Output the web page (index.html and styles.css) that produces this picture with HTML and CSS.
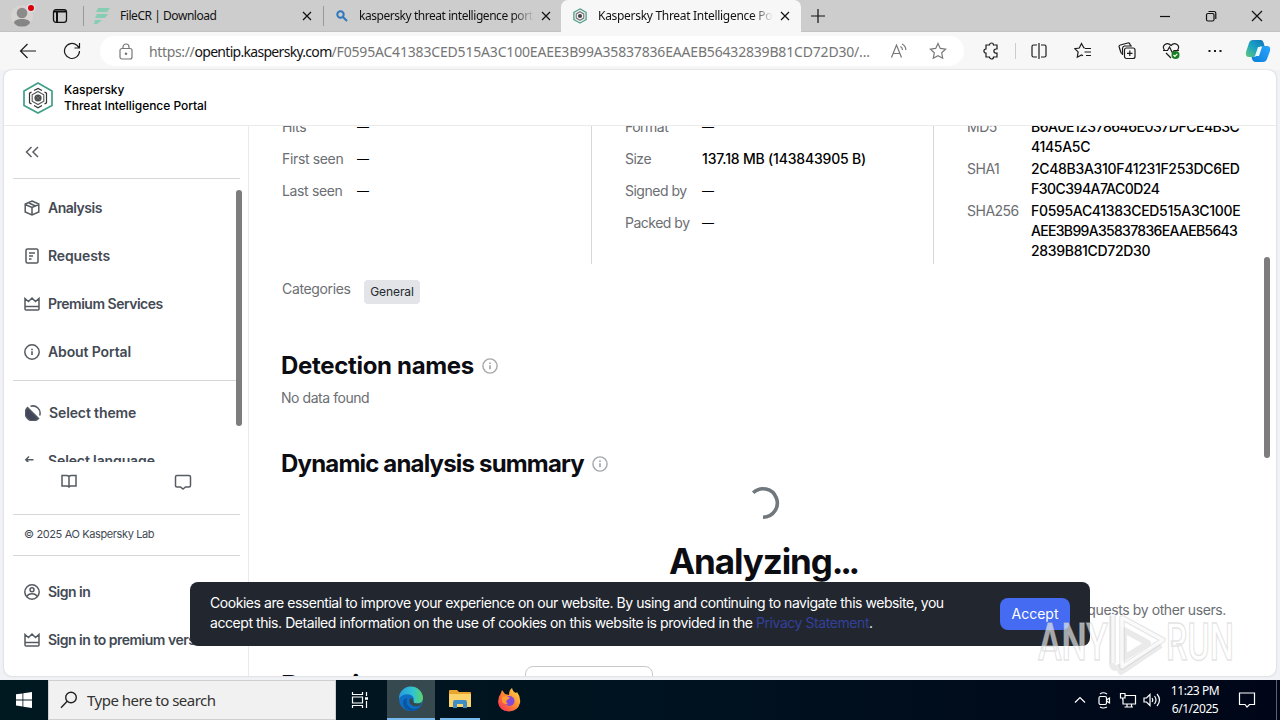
FILE: index.html
```html
<!DOCTYPE html>
<html lang="en">

<head>
    <meta charset="utf-8">
    <title>Kaspersky Threat Intelligence Portal</title>
    <link rel="stylesheet" href="styles.css">
</head>

<body>
    <!-- tab strip -->
    <div class="tabs">
        <svg class="profile" width="32" height="32" viewBox="0 0 32 32">
            <circle cx="16" cy="16" r="11" fill="#d6d3d1" />
            <circle cx="16" cy="13" r="5.300" fill="#8b8b8b" />
            <path d="M8 23c0-3 4-4 8-4s8 1 8 4c-2 3-5 3.500-8 3.500S10 26 8 23z" fill="#858585" />
            <circle cx="25" cy="8" r="4.500" fill="#dcdcdc" />
            <circle cx="25" cy="8" r="3" fill="#d9000d" />
        </svg>
        <svg class="tab-menu" width="16" height="16" viewBox="0 0 16 16" fill="none" stroke="#111" stroke-width="1.300">
            <rect x="1.500" y="1.700" width="13" height="12.600" rx="2.500" />
            <path d="M2 3.500h12M5 4v10" stroke-width="2" />
        </svg>
        <div class="tab tab-first">
            <svg class="favicon" width="16" height="18" viewBox="0 0 16 18" fill="#86cdb4">
                <path d="M4 1h12l-3 4H2zM3 7h11l-3 4H1zM1 13h7l-5 4H0z" />
            </svg>
            <span class="tab-title">FileCR | Download</span>
            <svg class="close" width="10" height="10" viewBox="0 0 10 10"><path d="M1 1l8 8M9 1l-8 8" /></svg>
        </div>
        <div class="tab tab-second">
            <svg class="favicon" width="16" height="16" viewBox="0 0 16 16" fill="none" stroke="#2f77bd" stroke-width="2">
                <circle cx="6.500" cy="6.500" r="3.200" /><path d="M9 9l4 4" />
            </svg>
            <span class="tab-title fade">kaspersky threat intelligence portal</span>
            <svg class="close" width="10" height="10" viewBox="0 0 10 10"><path d="M1 1l8 8M9 1l-8 8" /></svg>
        </div>
        <div class="tab tab-active">
            <svg class="favicon" width="16" height="16" viewBox="0 0 32 34" fill="none">
                <path d="M16 2l13 7.500v15L16 32 3 24.500v-15z" stroke="#5da592" stroke-width="3" />
                <path d="M16 8l8 4.500v9L16 26l-8-4.500v-9z" stroke="#777" stroke-width="2.500" />
                <circle cx="16" cy="17" r="4.500" fill="#444" />
            </svg>
            <span class="tab-title fade">Kaspersky Threat Intelligence Portal</span>
            <svg class="close" width="10" height="10" viewBox="0 0 10 10"><path d="M1 1l8 8M9 1l-8 8" /></svg>
        </div>
        <svg class="new-tab" width="14" height="14" viewBox="0 0 14 14"><path d="M7 0v14M0 7h14" /></svg>
        <div class="win-buttons">
            <svg width="12" height="12" viewBox="0 0 12 12"><path d="M1 6.500h10" /></svg>
            <svg width="12" height="12" viewBox="0 0 12 12"><rect x="1.500" y="3.500" width="7.500" height="7.500" rx="1.500" /><path d="M3.500 1.500H9Q10.800 1.500 10.800 3.500V9" /></svg>
            <svg width="12" height="12" viewBox="0 0 12 12"><path d="M1 1l10 10M11 1L1 11" /></svg>
        </div>
    </div>

    <!-- address bar -->
    <div class="toolbar">
        <svg class="back" width="18" height="18" viewBox="0 0 18 18"><path d="M17 9H2M8.500 2l-7 7 7 7" /></svg>
        <svg class="reload" width="18" height="18" viewBox="0 0 18 18"><path d="M16.500 9a7.500 7.500 0 1 1-2.600-5.700L16.500 6M16.500 1v5h-5" /></svg>
        <div class="address">
            <svg class="lock" width="14" height="17" viewBox="0 0 14 17" fill="none" stroke="#777" stroke-width="1.200">
                <rect x="1" y="5.500" width="12" height="10.500" rx="2" /><path d="M4 5.500V4a3 3 0 0 1 6 0v1.500" /><circle cx="7" cy="10.800" r=".7" fill="#777" />
            </svg>
            <span class="url"><span class="scheme">https://</span><b>opentip.kaspersky.com</b>/F0595AC41383CED515A3C100EAEE3B99A35837836EAAEB56432839B81CD72D30/...</span>
            <svg class="read" width="18" height="16" viewBox="0 0 18 16" fill="none" stroke="#777" stroke-width="1.200">
                <path d="M1.500 14.500L6.500 2l5 12.500M3.200 10.500h6.600M10.500 3.500q2 1.200 2 3.500M12 1q4 2 3.800 6" />
            </svg>
            <svg class="fav" width="18" height="18" viewBox="0 0 18 18" fill="none" stroke="#777" stroke-width="1.200">
                <path d="M9 1.500l2.300 4.900 5.300.7-3.900 3.700 1 5.400L9 13.600l-4.700 2.600 1-5.400L1.400 7.100l5.300-.7z" />
            </svg>
        </div>
        <div class="tools">
            <svg width="18" height="18" viewBox="0 0 18 18"><path d="M4 3h3.500a2 2 0 0 1 4 0H15v4h-1a2 2 0 0 0 0 4.200h1V15h-3.500a2 2 0 0 1-4 0H4v-3.800a2 2 0 0 1 0-4.200z" /></svg>
            <i class="tool-line"></i>
            <svg width="18" height="18" viewBox="0 0 18 18"><path d="M7 3H3.500Q2 3 2 4.500v9Q2 15 3.500 15H7M9 1v16M11 3h3.500Q16 3 16 4.500v9q0 1.500-1.500 1.500H11" /></svg>
            <svg width="18" height="18" viewBox="0 0 18 18"><path d="M11 6L9.800 5.800 7.500 1.500 5.300 6l-4.500.7 3.300 3.200-.8 5.300 4.200-2.300 1.500.8M11 6.500h6M10.500 10H17M12 13.500h5" /></svg>
            <svg width="18" height="18" viewBox="0 0 18 18"><rect x="6.500" y="6" width="10.500" height="10.500" rx="2" /><path d="M11.800 8.500v5.500M9 11.300h5.500M4 11.500Q3 11.500 2.700 10L1.200 5Q.8 3.500 2.300 3l7.500-2q1.700-.4 2.200 1.200l.4 1.600M4.500 13V6.500q0-2 2-2.500H14" /></svg>
            <svg width="18" height="18" viewBox="0 0 18 18"><path d="M2.500 8Q0 4.500 3 2.500t6 1q3-3 6-1T15.500 8M1 8.500h4.500L7.500 5l3 6L12 8.500h5M4 11l5 5" /><circle cx="13.500" cy="13" r="4" fill="#168021" stroke="none" /><path d="M11.500 13l1.400 1.300 2.400-2.500" stroke="#fff" /></svg>
            <svg width="18" height="18" viewBox="0 0 18 18"><path d="M2.500 9h2M8 9h2M13.500 9h2" stroke-width="2" /></svg>
        </div>
        <svg class="copilot" width="26" height="24" viewBox="0 0 26 24">
            <defs>
                <linearGradient id="cp1" x1="0" y1="1" x2="1" y2="0"><stop offset="0" stop-color="#62ca77" /><stop offset=".5" stop-color="#19a2c5" /><stop offset="1" stop-color="#1471b9" /></linearGradient>
                <linearGradient id="cp2" x1="0" y1="1" x2="1" y2="0"><stop offset="0" stop-color="#0b7ed8" /><stop offset="1" stop-color="#2aa5ff" /></linearGradient>
            </defs>
            <path d="M8 1h8q2 0 2.700 3l.8 3h-3q-2 0-3 3l-1.500 5q-1 3-4 3H4q-4 0-3-5L4 4q1-3 4-3z" fill="url(#cp1)" />
            <path d="M18 7h4q4 0 3 5l-3 8q-1 3-4 3h-8q-2 0-3-3l-.5-2H9q2.500 0 3.500-3l1.600-5q1-3 3.900-3z" fill="url(#cp2)" />
            <path d="M13 8h4l-3 9h-4z" fill="#eef8fb" />
        </svg>
    </div>

    <!-- page -->
    <div class="page">
        <header class="header">
            <svg width="32" height="34" viewBox="0 0 32 34" fill="none">
                <path d="M16 2l14 8v14.500L16 32 2 24.500V10z" stroke="#3f9f88" stroke-width="1.700" />
                <path d="M12 9.500l4-2 4 2M22.500 11l2 1.200v9.600l-2 1.200M9.500 11l-2 1.200v9.600l2 1.200M12 24.500l4 2.200 4-2.200" stroke="#333" stroke-width="1.200" />
                <path d="M16 10.500l5.800 3.200v6.600L16 23.500l-5.800-3.200v-6.600z" stroke="#555" stroke-width="1.100" />
                <circle cx="16" cy="17" r="3.600" fill="#4c4f50" />
                <path d="M13 14l6 6M19 14l-6 6" stroke="#888" stroke-width=".5" />
            </svg>
            <div class="brand">Kaspersky<br>Threat Intelligence Portal</div>
        </header>

        <div class="content">
            <aside class="sidebar">
                <div class="collapse">
                    <svg width="14" height="12" viewBox="0 0 14 12" fill="none" stroke="#5a5e64" stroke-width="1.500"><path d="M6.500 1l-5 5 5 5M13 1L8 6l5 5" /></svg>
                </div>
                <nav class="menu">
                    <a class="item"><svg viewBox="0 0 16 16"><path d="M8 1l6.800 3v8L8 15l-6.800-3V4zM1.200 4.500L8 7.500l6.800-3M8 7.500V15M5 3l6.500 3" /></svg><span>Analysis</span></a>
                    <a class="item"><svg viewBox="0 0 16 16"><rect x="2" y="1" width="12" height="14" rx="1.500" /><path d="M5 5h6M5 8h4M5 11h2.500" /></svg><span class="wide">Requests</span></a>
                    <a class="item"><svg viewBox="0 0 16 16"><path d="M1 2.500l3.500 3L8 2l3.500 3.500 3.500-3V13q0 1-1 1H2q-1 0-1-1zM1 10.500h14" /></svg><span>Premium Services</span></a>
                    <a class="item"><svg viewBox="0 0 16 16"><circle cx="8" cy="8" r="7.200" /><path d="M8 7.300V11M8 4.700v1.500" stroke-width="1.600" /></svg><span class="wide">About Portal</span></a>
                    <hr>
                    <a class="item theme"><svg viewBox="0 0 16 16"><path d="M2.500 2.500A7.500 7.500 0 0 0 13.500 13.500z" fill="#41465a" /><path d="M5.500 1.300A7.300 7.300 0 0 1 14.700 10.500" /></svg><span class="wide">Select theme</span></a>
                    <a class="item"><svg viewBox="0 0 16 16"><path d="M9.500 6.800H2M5 3.500L1.800 6.800 5 10" /></svg><span class="wide">Select language</span></a>
                    <i class="side-scroll"></i>
                </nav>
                <div class="links">
                    <svg width="16" height="14" viewBox="0 0 16 14"><path d="M8 2.500Q7 1.500 5.500 1.500H1v10.500h5q1.500 0 2 1 .5-1 2-1h5V1.500h-4.500Q9 1.500 8 2.500V13" /></svg>
                    <svg width="18" height="16" viewBox="0 0 18 16"><path d="M3 1.500h12q1.500 0 1.500 1.500v8.500q0 1.500-1.500 1.500h-3.500L9 15l-2.500-2H3q-1.500 0-1.500-1.500V3Q1.500 1.500 3 1.500z" /></svg>
                </div>
                <div class="copyright">© 2025 AO Kaspersky Lab</div>
                <div class="account">
                    <a class="item"><svg viewBox="0 0 16 16"><circle cx="8" cy="8" r="7.200" /><circle cx="8" cy="5.800" r="2" /><path d="M2.800 12.800Q4 9.800 8 9.800t5.200 3" /></svg><span>Sign in</span></a>
                    <a class="item"><svg viewBox="0 0 16 16"><path d="M1 2.500l3.500 3L8 2l3.500 3.500 3.500-3V13q0 1-1 1H2q-1 0-1-1zM1 10.500h14" /></svg><span>Sign in to premium version</span></a>
                </div>
            </aside>

            <main class="main">
                <div class="cols">
                    <dl class="col general">
                        <dt>Hits</dt><dd>—</dd>
                        <dt>First seen</dt><dd>—</dd>
                        <dt>Last seen</dt><dd>—</dd>
                    </dl>
                    <dl class="col file">
                        <dt>Format</dt><dd>—</dd>
                        <dt>Size</dt><dd class="size">137.18 MB (143843905 B)</dd>
                        <dt>Signed by</dt><dd>—</dd>
                        <dt>Packed by</dt><dd>—</dd>
                    </dl>
                    <dl class="col hashes">
                        <dt>MD5</dt><dd><span class="tight">B6A0E12378646E037DFCE4B3C</span><br>4145A5C</dd>
                        <dt>SHA1</dt><dd>2C48B3A310F41231F253DC6ED<br><span class="tight">F30C394A7AC0D24</span></dd>
                        <dt>SHA256</dt><dd>F0595AC41383CED515A3C100E<br><span class="tighter">AEE3B99A35837836EAAEB5643</span><br>2839B81CD72D30</dd>
                    </dl>
                </div>
                <div class="categories"><span>Categories</span><span class="tag">General</span></div>
                <h2 class="detection"><span>Detection names</span>
                    <svg viewBox="0 0 16 16"><circle cx="8" cy="8" r="7.100" /><path d="M8 7.300V11.300M8 4.500v1.600" stroke-width="1.700" /></svg></h2>
                <p class="empty">No data found</p>
                <h2 class="dynamic"><span>Dynamic analysis summary</span>
                    <svg viewBox="0 0 16 16"><circle cx="8" cy="8" r="7.100" /><path d="M8 7.300V11.300M8 4.500v1.600" stroke-width="1.700" /></svg></h2>
                <div class="progress">
                    <svg width="34" height="34" viewBox="0 0 34 34" fill="none" stroke="#70787e" stroke-width="3.600"><path d="M7.200 6.800A14.200 14.200 0 1 1 17 31.200" /></svg>
                    <h1>Analyzing<span class="dots">...</span></h1>
                </div>
                <p class="note">requests by other users.</p>
                <div class="premium-row"><h2>Premium content</h2><div class="select"></div></div>
                <i class="page-scroll"></i>
            </main>
        </div>
    </div>

    <div class="cookies">
        <p><span class="line-one">Cookies are essential to improve your experience on our website. By using and continuing to navigate this website, you</span><br>accept this. Detailed information on the use of cookies on this website is provided in the <a>Privacy Statement</a>.</p>
        <button>Accept</button>
    </div>

    <svg class="watermark" width="210" height="70" viewBox="0 0 210 70">
        <g fill="#fff" fill-opacity=".62" stroke="#c4c4c4" stroke-opacity=".45" stroke-width="1.500" font-family="Roboto, sans-serif" font-weight="500" font-size="51">
            <text x="6" y="54" textLength="70" lengthAdjust="spacingAndGlyphs">ANY</text>
            <text x="134" y="54" textLength="68" lengthAdjust="spacingAndGlyphs">RUN</text>
        </g>
        <g fill="none" stroke-linejoin="round">
            <path d="M80 10v47q0 7 7 4l2 5 40-27M92 24v28l24-15z" stroke="#bbb" stroke-opacity=".3" stroke-width="6" />
            <path d="M81 8v49M91 12l40 22-41 27V12z" stroke="#bbb" stroke-opacity=".4" stroke-width="5.500" />
            <path d="M81 8v49M91 12l40 22-41 27V12z" stroke="#fff" stroke-opacity=".8" stroke-width="3.500" />
        </g>
    </svg>

    <!-- taskbar -->
    <footer class="taskbar">
        <div class="start"><svg width="16" height="16" viewBox="0 0 16 16" fill="#fff"><path d="M0 2.300L6.500 1.400v6.100H0zM7.300 1.300L16 0v7.500H7.300zM0 8.400h6.500v6.100L0 13.600zM7.300 8.400H16V16l-8.700-1.300z" /></svg></div>
        <div class="search">
            <svg width="18" height="18" viewBox="0 0 18 18" fill="none" stroke="#222" stroke-width="1.400"><circle cx="11" cy="6.500" r="5.300" /><path d="M7.200 10.300L1 16.800" /></svg>
            <span>Type here to search</span>
        </div>
        <div class="app"><svg width="18" height="18" viewBox="0 0 18 18" fill="none" stroke="#fff" stroke-width="1.200"><path d="M1.500 1v2.500h10V1M1.500 17v-2.500h10V17M1.500 6h10v6h-10zM15.500 1v4M15.500 10v7" /><path d="M14 7.500h3" stroke-width="2.500" /></svg></div>
        <div class="app current">
            <svg width="26" height="26" viewBox="0 0 26 26">
                <defs><linearGradient id="edge"><stop offset="0" stop-color="#259be0" /><stop offset=".6" stop-color="#32c5cf" /><stop offset="1" stop-color="#5fd363" /></linearGradient></defs>
                <circle cx="13" cy="13" r="12" fill="#0e6fc5" />
                <path d="M1 13A12 12 0 0 1 25 12q0 5.500-6 5.500-4 0-3.500-2.500 1.500-5-4-6.500Q4 7.500 1 13z" fill="url(#edge)" />
                <path d="M9 12q-2 7 4 10 5 2.500 10-2-4 5.500-11 4.800Q5 23 5 16q1-3.500 4-4z" fill="#0a55a4" />
                <path d="M15.500 15q-.5 2.500 3.500 2.500 3 0 4.500-1.500l-.8 3q-5 3-9.200 0-4-3-1-7 2.500.500 3 3z" fill="#36494f" />
            </svg>
        </div>
        <div class="app running">
            <svg width="24" height="22" viewBox="0 0 24 22"><path d="M1 3q0-1 1-1h7l2 2h11q1 0 1 1v14H1z" fill="#e9a52c" /><path d="M1 6h22v13H1z" fill="#fcd36a" /><path d="M5 20v-6q0-2 2-2h10q2 0 2 2v6h-4v-4H9v4z" fill="#3f8ec5" /></svg>
        </div>
        <div class="app">
            <svg width="24" height="26" viewBox="0 0 24 26">
                <defs><linearGradient id="fox" x1="1" y1="0" x2="0" y2="1"><stop offset="0" stop-color="#ffe44a" /><stop offset=".5" stop-color="#ff8632" /><stop offset="1" stop-color="#f5235e" /></linearGradient></defs>
                <path d="M4 6l1-3 3 4 4 1Q12 3 15 1q1 4 4 5l1-1q4 5 3 11-2 8-11 8.500Q2 24 1 15 1 10 4 6z" fill="url(#fox)" />
                <circle cx="12.500" cy="14" r="5" fill="#8549d8" /><path d="M5 10q5-2 8 1l-3 2q-2 2 1 4-4 1-6-3z" fill="#ff9c30" />
            </svg>
        </div>
        <div class="tray">
            <svg width="12" height="18" viewBox="0 0 12 18"><path d="M1 11.500l5-5 5 5" /></svg>
            <svg class="meet" width="14" height="18" viewBox="0 0 14 18"><rect x="2" y="5.500" width="7.500" height="8" rx="1.500" /><path d="M9.500 9l3-2v5l-3-2M3 3q3-2.500 7 0M3 16q3 2 7 0" /></svg>
            <svg class="network" width="18" height="18" viewBox="0 0 18 18"><path d="M6 4.500h10.500V13H4V8M8 13v3M12.500 13v3M5.500 16H14M1.500 2.500H6v4.500H1.500zM3.700 7v2" /></svg>
            <svg class="sound" width="18" height="18" viewBox="0 0 18 18"><path d="M1 7h2.500L7 3.500v11L3.500 11H1zM9 7q1.500 2 0 4M11.500 5q3 4 0 8M14 3q5 6 0 12" /></svg>
        </div>
        <div class="clock">11:23 PM<br>6/1/2025</div>
        <svg class="notif" width="18" height="18" viewBox="0 0 18 18"><path d="M1.500 2h15v11.500h-5L9 16l-2-2.500H1.500z" /></svg>
        <i class="desktop-line"></i>
    </footer>
</body>

</html>
```
FILE: styles.css
```css
* {
    box-sizing: border-box;
}

body {
    margin: 0;
    width: 1280px;
    height: 720px;
    overflow: hidden;
    background: #f0f2f5;
    font-family: "Inter", sans-serif;
    font-size: 14px;
    color: #15171c;
}

svg {
    display: block;
    flex: none;
}

p, dl, dd, h1, h2 {
    margin: 0;
}

/* tab strip */
.tabs {
    display: flex;
    align-items: center;
    height: 32px;
    background: #cdcdcd;
    border-bottom: 1px solid #c2c2c2;
    font-family: "Noto Sans", sans-serif;
    font-size: 12px;
    color: #111;
}

.profile {
    margin-left: 6px;
}

.tab-menu {
    margin-left: 14px;
}

.tab {
    display: flex;
    align-items: center;
    height: 32px;
    padding-left: 11px;
}

.tab-first {
    width: 240px;
    margin-left: 15px;
    background: linear-gradient(#999, #999) 0 6px / 1px 20px no-repeat;
}

.tab-second {
    width: 238px;
    background: linear-gradient(#999, #999) 0 6px / 1px 20px no-repeat;
}

.tab-active {
    width: 240px;
    background: #f7f7f7;
    border-radius: 7px 7px 0 0;
}

.tab-title {
    width: 175px;
    margin-left: 10px;
    overflow: hidden;
    white-space: nowrap;
    letter-spacing: -.45px;
}

.tab-second .tab-title {
    margin-left: 9px;
}

.tab-active .tab-title {
    letter-spacing: -.3px;
}

.fade {
    -webkit-mask-image: linear-gradient(90deg, #000 88%, transparent);
    mask-image: linear-gradient(90deg, #000 88%, transparent);
}

.close, .new-tab, .win-buttons svg {
    fill: none;
    stroke: #111;
    stroke-width: 1.200;
}

.close {
    margin-left: 7px;
}

.new-tab {
    margin-left: 10px;
}

.win-buttons {
    display: flex;
    gap: 34px;
    margin: 0 17px 0 auto;
}

/* address bar */
.toolbar {
    display: flex;
    align-items: center;
    height: 38px;
    background: #f7f7f7;
}

.back, .reload, .tools svg {
    fill: none;
    stroke: #1b1b1b;
    stroke-width: 1.200;
}

.back {
    margin-left: 19px;
}

.reload {
    margin-left: 26px;
}

.address {
    display: flex;
    align-items: center;
    width: 864px;
    height: 30px;
    margin-left: 19px;
    padding-left: 19px;
    background: #fff;
    border-radius: 15px;
}

.url {
    width: 726px;
    margin-left: 16px;
    font-family: "Noto Sans", sans-serif;
    letter-spacing: -.18px;
    color: #757575;
    white-space: nowrap;
}

.scheme {
    letter-spacing: -.35px;
}

.url b {
    font-weight: 400;
    letter-spacing: -.7px;
    color: #111;
}

.read {
    margin-left: 15px;
}

.fav {
    margin-left: 21px;
}

.tools {
    display: flex;
    align-items: center;
    gap: 26px;
    width: 245px;
    margin-left: 18px;
}

.tool-line {
    width: 1px;
    height: 16px;
    margin: 0 -12px 0 -11px;
    background: #ccc;
}

.copilot {
    margin-left: 18px;
}

/* page */
.page {
    height: 606px;
    margin: 0 4px;
    overflow: hidden;
    background: #fff;
    border-radius: 8px;
    box-shadow: 0 0 2px #b9bbbe;
}

.header {
    display: flex;
    align-items: center;
    height: 56px;
    padding-left: 18px;
    border-bottom: 1px solid #ebebeb;
}

.brand {
    margin-left: 10px;
    font-size: 12px;
    font-weight: 500;
    line-height: 16px;
    letter-spacing: -.04px;
    color: #000;
}

.content {
    display: flex;
    height: 550px;
}

.sidebar {
    width: 245px;
    padding-left: 9px;
    border-right: 1px solid #e9eaec;
}

.collapse {
    width: 227px;
    height: 53px;
    padding: 20px 0 0 12px;
    border-bottom: 1px solid #d5d8db;
}

.menu {
    position: relative;
    height: 283px;
    padding-top: 5px;
    overflow: hidden;
}

.menu hr {
    width: 227px;
    height: 1px;
    margin: 4px 0 8px;
    border: 0;
    background: #d5d8db;
}

.item {
    display: flex;
    align-items: center;
    gap: 8px;
    height: 48px;
    padding-left: 11px;
    font-weight: 600;
    letter-spacing: -.5px;
    color: #434a54;
    white-space: nowrap;
}

.item span {
    padding-bottom: 2px;
}

.item .wide {
    letter-spacing: -.12px;
}

.theme {
    padding-left: 12px;
}

.item svg, .links svg {
    fill: none;
    stroke: #555b62;
    stroke-width: 1.500;
}

.item svg {
    width: 16px;
    height: 16px;
}

.side-scroll {
    position: absolute;
    left: 223px;
    top: 11px;
    width: 6px;
    height: 236px;
    background: #7d7d7d;
    border-radius: 3px;
}

.links {
    display: flex;
    gap: 97px;
    width: 227px;
    height: 53px;
    padding: 12px 0 0 48px;
    border-bottom: 1px solid #d5d8db;
}

.copyright {
    width: 227px;
    height: 41px;
    padding-left: 11px;
    border-bottom: 1px solid #d5d8db;
    font-size: 11px;
    line-height: 39px;
    letter-spacing: -.38px;
    color: #434a54;
}

.account {
    padding-top: 12px;
    overflow: hidden;
}

.main {
    position: relative;
    flex: 1;
    padding-left: 32px;
    overflow: hidden;
}

.cols {
    display: flex;
    height: 153px;
    margin-top: -15px;
}

.col {
    display: grid;
    align-content: start;
    line-height: 32px;
}

.general {
    grid-template-columns: 75px auto;
    justify-content: start;
    width: 311px;
    padding-left: 1px;
    border-right: 1px solid #d5d8db;
}

.file {
    grid-template-columns: 77px auto;
    width: 342px;
    padding-left: 33px;
    border-right: 1px solid #d5d8db;
}

.hashes {
    grid-template-columns: 64px auto;
    gap: 2px 0;
    padding: 6px 0 0 33px;
    line-height: 20px;
}

dt, .categories {
    letter-spacing: -.35px;
    color: #6b6e72;
}

.file dt, .hashes dt {
    letter-spacing: -.5px;
}

dd {
    color: #000;
    font-weight: 500;
    white-space: nowrap;
}

.hashes dd {
    letter-spacing: -.32px;
}

.hashes .tight {
    letter-spacing: -.5px;
}

.hashes .tighter {
    letter-spacing: -.68px;
}

.general dd, .file dd {
    font-size: 12px;
}

.file .size {
    font-size: 14px;
    letter-spacing: -.18px;
}

.categories {
    display: flex;
    align-items: flex-start;
    height: 24px;
    margin-top: 16px;
    padding-left: 1px;
}

.categories span:first-child {
    width: 82px;
}

.tag {
    width: 56px;
    height: 24px;
    border-radius: 4px;
    background: #e2e4e7;
    font-size: 12px;
    line-height: 24px;
    letter-spacing: -.1px;
    text-align: center;
    color: #24292f;
}

h2 {
    display: flex;
    align-items: center;
    gap: 8px;
    height: 32px;
    font-size: 24px;
    font-weight: 700;
    color: #0c0d12;
}

h2 svg {
    width: 16px;
    height: 16px;
    fill: none;
    stroke: #a5a7a9;
    stroke-width: 1.400;
}

.detection {
    margin-top: 46px;
    letter-spacing: -.32px;
}

.empty {
    height: 20px;
    margin-top: 6px;
    line-height: 20px;
    letter-spacing: -.45px;
    color: #6b6e72;
}

.dynamic {
    margin-top: 40px;
    letter-spacing: -.82px;
}

.detection span, .dynamic span {
    padding-bottom: 1px;
}

.progress {
    display: flex;
    flex-direction: column;
    align-items: center;
    width: 964px;
    margin-top: 6px;
}

h1 {
    margin-top: 19px;
    font-size: 35px;
    line-height: 44px;
    letter-spacing: -1.1px;
    color: #0c0d12;
}

.dots {
    letter-spacing: -3.3px;
}

.note {
    width: 945px;
    margin-top: 17px;
    line-height: 20px;
    letter-spacing: -.4px;
    text-align: right;
    color: #6b6e72;
}

.premium-row {
    display: flex;
    margin-top: 46px;
}

.premium-row h2 {
    width: 244px;
    height: 36px;
    margin-top: 2px;
    font-size: 28px;
    white-space: nowrap;
}

.select {
    width: 128px;
    height: 40px;
    border: 1px solid #c6c8cb;
    border-radius: 8px;
}

.page-scroll {
    position: absolute;
    right: 6px;
    top: 131px;
    width: 6px;
    height: 201px;
    background: #7d7d7d;
    border-radius: 3px;
}

/* cookie banner over the page */
.cookies {
    position: absolute;
    left: 190px;
    top: 582px;
    display: flex;
    align-items: center;
    width: 900px;
    height: 64px;
    padding-left: 20px;
    border-radius: 8px;
    background: #22272f;
    color: #fff;
    line-height: 20px;
}

.cookies p {
    width: 790px;
    margin-top: -2px;
    letter-spacing: -.43px;
    white-space: nowrap;
}

.line-one {
    letter-spacing: -.45px;
}

.cookies a {
    color: #33409b;
}

.cookies button {
    width: 70px;
    height: 32px;
    padding: 0 0 2px;
    border: 0;
    border-radius: 8px;
    background: #446bf2;
    color: #fff;
    font: 14px "Inter", sans-serif;
}

.watermark {
    position: absolute;
    left: 1032px;
    top: 606px;
}

/* taskbar */
.taskbar {
    display: flex;
    height: 40px;
    margin-top: 4px;
    background: linear-gradient(90deg, #001820, #001320 50%, #000618);
}

.start {
    width: 48px;
    padding: 12px 0 0 16px;
}

.search {
    display: flex;
    align-items: center;
    gap: 9px;
    width: 288px;
    padding-left: 11px;
    border: 1px solid #cfcfcf;
    background: #f1f1f1;
    font-family: "Noto Sans", sans-serif;
    font-size: 15px;
    letter-spacing: -.5px;
    color: #333;
}

.app {
    display: flex;
    align-items: center;
    justify-content: center;
    width: 48px;
}

.app:nth-child(3) {
    margin-right: 3px;
}

.current {
    background: #36494f;
    border-bottom: 2px solid #76b9ed;
}

.running {
    width: 40px;
    margin: 0 5px;
    border-bottom: 2px solid #76b9ed;
}

.tray {
    display: flex;
    align-items: center;
    margin-left: auto;
}

.meet {
    margin-left: 11px;
}

.network {
    margin-left: 8px;
}

.sound {
    margin-left: 6px;
}

.tray svg, .notif {
    fill: none;
    stroke: #fff;
    stroke-width: 1.200;
}

.clock {
    width: 68px;
    padding-top: 2px;
    font: 12px/18px "Noto Sans", sans-serif;
    letter-spacing: -.45px;
    text-align: center;
    color: #fff;
}

.notif {
    margin: 11px 20px 0 9px;
}

.desktop-line {
    width: 1px;
    margin-right: 3px;
    background: #5b6370;
}
```
